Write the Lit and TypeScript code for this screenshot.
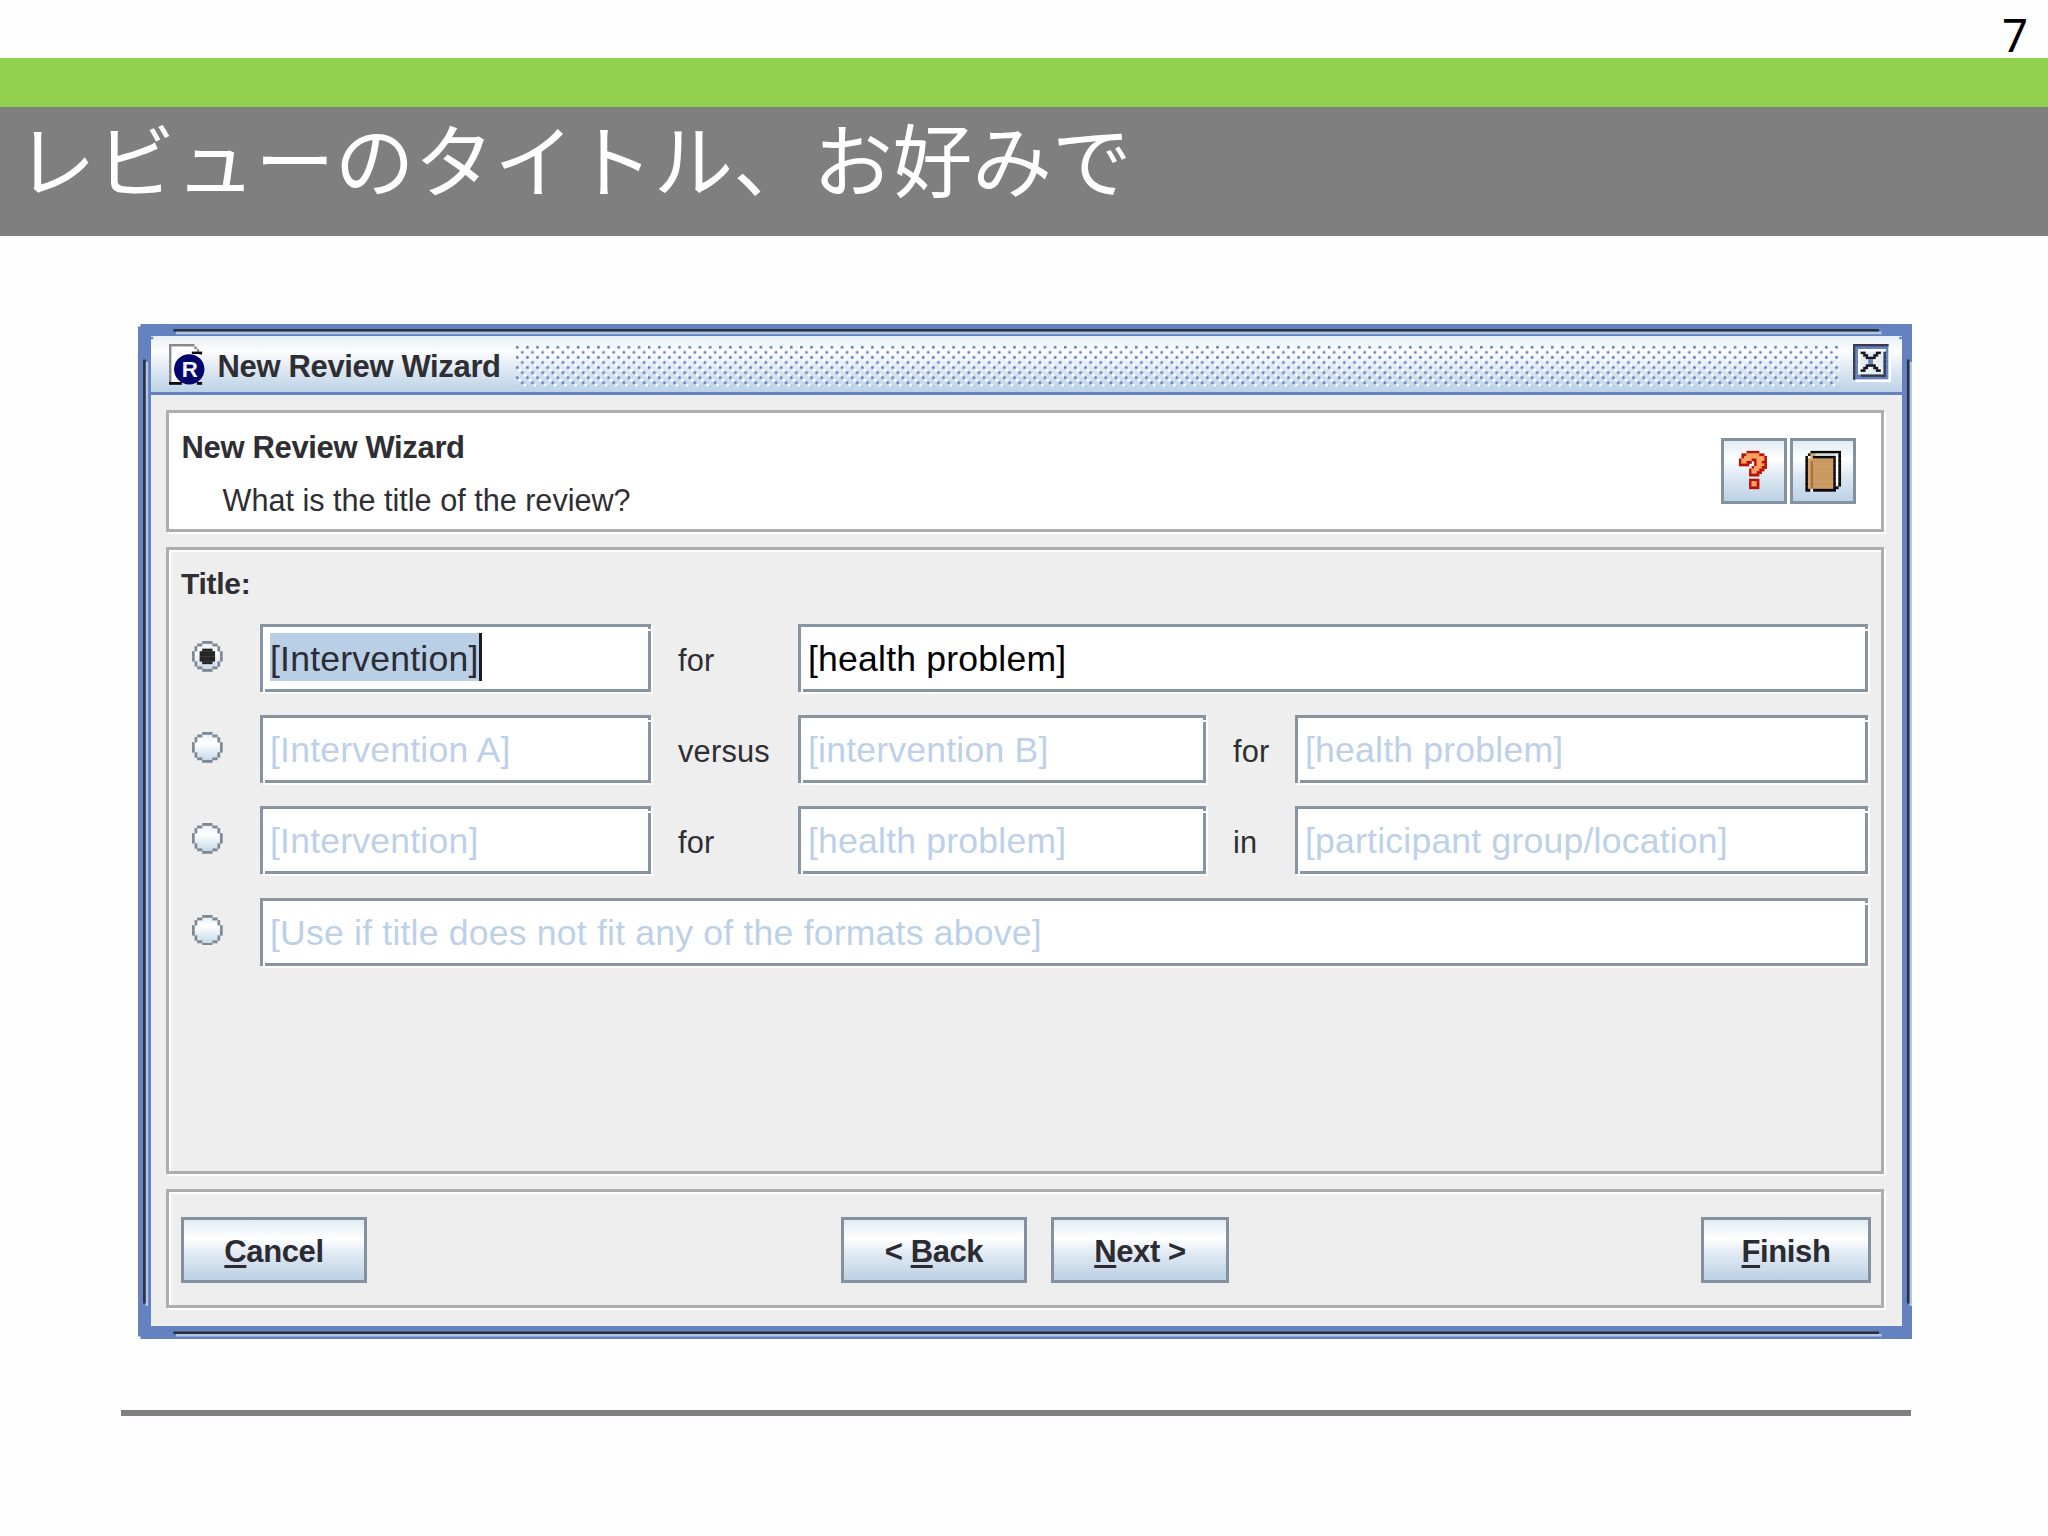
import { LitElement, html, svg, css } from "lit";
import { customElement, property } from "lit/decorators.js";

/**
 * Draws a grid of square pixels; each character of a row selects a palette colour.
 * Runs overlap their neighbours slightly so that no seams show between them.
 */
const pixels = (rows: string[], palette: Record<string, string>) =>
  rows.flatMap((row, y) => {
    const out = [];
    let x = 0;
    while (x < row.length) {
      let end = x + 1;
      while (end < row.length && row[end] === row[x]) end++;
      const fill = palette[row[x]];
      if (fill) out.push(svg`<rect x=${x} y=${y} width=${end - x + 0.08} height="1.12" fill=${fill}></rect>`);
      x = end;
    }
    return out;
  });

const QUESTION = [
  "   rrrrr   ",
  " rrooooorr ",
  " roooooooor",
  "roooorrooor",
  "roorr roorr",
  "rrrr  rooor",
  "     rooorr",
  "    rooorr ",
  "    roorr  ",
  "    rrrr   ",
  "           ",
  "    rrrr   ",
  "    roor   ",
  "    roor   ",
  "    rrrr   ",
];

const BOOK = [
  "  kkkkkkkkkkkk",
  " kttggggggggwk",
  "kwtkkkkkkkkkwk",
  "kttbbbbbbbbkwk",
  ...Array(10).fill("ktdbbbbbbbbkwk"),
  "ktdbbbbbbbbkk ",
  "kkwkkkkkkkkk  ",
];

const RING = [
  "    gggg    ",
  "  gg    gg  ",
  " g        g ",
  " g        g ",
  "g          g",
  "g          g",
  "g          g",
  "g          g",
  " g        g ",
  " g        g ",
  "  gg    gg  ",
  "    gggg    ",
];

const DOT = [" kkkk ", "kkkkkk", "kkkkkk", "kkkkkk", "kkkkkk", " kkkk "];

const CLOSE = [
  "nnnnnnnnnnnnnn ",
  "nbbbbbbbbbbbbbw",
  "nbwwwwwwwwwwwbw",
  "nbwkkllllkklnbw",
  "nbwlkkllkkllnbw",
  "nbwllkkkkwllnbw",
  "nbwlllbbwlllnbw",
  "nbwlllbbwlllnbw",
  "nbwllkkkkwllnbw",
  "nbwlkkwlkkwlnbw",
  "nbwkkwlllkkwnbw",
  "nbwlllllllllnbw",
  "nbbnnnnnnnnnnbw",
  "nbbbbbbbbbbbbbw",
  " wwwwwwwwwwwwww",
];

const PAGE = [
  "gggggggggg      ",
  "gwwwwwwwwwgw    ",
  "gwwwwwwwwwwgw   ",
  "gwwwwwwwwkkkk   ",
  ...Array(11).fill("gwwwwwwwwwww    "),
  "kkkkk      kk   ",
];

@customElement("wizard-field")
export class WizardField extends LitElement {
  @property() text = "";
  @property({ type: Boolean, reflect: true }) active = false;
  @property({ type: Boolean, reflect: true }) selected = false;

  static styles = css`
    :host {
      display: block;
      box-sizing: border-box;
      position: relative;
      height: 68px;
      border: 3px solid #8794a1;
      background: #fff;
      box-shadow: 2px 2px 0 #fff;
      padding: 6px 0 0 7.5px;
      font: 35.6px/52px "Liberation Sans", Arial, sans-serif;
      letter-spacing: 0.2px;
      color: #bcd1e7;
      white-space: nowrap;
    }
    :host([active]) { color: #000; }
    :host([selected]) { color: #2c2c34; }
    :host::before,
    :host::after {
      content: "";
      position: absolute;
      background: #fff;
    }
    :host::before { right: -3px; top: 2px; width: 3px; height: 2px; }
    :host::after { left: 0; bottom: -3px; width: 2px; height: 3px; }
    .value { display: inline-block; height: 48px; }
    :host([selected]) .value {
      background: #b8cfe5;
      border-right: 3px solid #1c1c1c;
    }
  `;

  render() {
    return html`<span class="value">${this.text}</span>`;
  }
}

@customElement("wizard-radio")
export class WizardRadio extends LitElement {
  @property({ type: Boolean }) checked = false;

  static styles = css`
    :host { display: block; width: 30.5px; height: 30.5px; }
    svg { display: block; width: 100%; height: 100%; }
  `;

  render() {
    return html`<svg viewBox="0 0 12 12">
      <defs>
        <linearGradient id="g" x1="0" y1="0" x2="0" y2="1">
          <stop offset="0" stop-color="#e3edf5"></stop>
          <stop offset=".35" stop-color="#ffffff"></stop>
          <stop offset="1" stop-color="#c2d6e8"></stop>
        </linearGradient>
      </defs>
      <circle cx="6" cy="6" r="5.6" fill="url(#g)"></circle>
      ${pixels(RING, { g: "#7d8995" })}
      ${this.checked ? svg`<g transform="translate(3 3)">${pixels(DOT, { k: "#262626" })}</g>` : ""}
    </svg>`;
  }
}

@customElement("wizard-button")
export class WizardButton extends LitElement {
  @property() before = "";
  @property() key = "";
  @property() after = "";

  static styles = css`
    :host {
      display: flex;
      box-sizing: border-box;
      height: 66px;
      justify-content: center;
      padding-top: 15px;
      border: 3px solid #84919e;
      background: linear-gradient(#e0ebf2, #fff 30%, #dfe8f2 58%, #bbd1e5);
      font: bold 31px/34px "Liberation Sans", Arial, sans-serif;
      letter-spacing: -0.4px;
      color: #2b2b31;
      white-space: pre;
    }
    .key {
      text-decoration: underline;
      text-decoration-thickness: 2.5px;
      text-underline-offset: 2.5px;
      text-decoration-skip-ink: none;
    }
  `;

  render() {
    return html`<span>${this.before}<span class="key">${this.key}</span>${this.after}</span>`;
  }
}

@customElement("app-root")
export class AppRoot extends LitElement {
  static styles = css`
    :host {
      display: block;
      width: 2048px;
      height: 1536px;
      overflow: hidden;
      background: #fefefe;
      font-family: "Liberation Sans", Arial, sans-serif;
      color: #2e2e33;
    }
    svg { display: block; }
    .number {
      box-sizing: border-box;
      height: 58px;
      padding: 4px 20px 0 0;
      text-align: right;
      font: 45.5px/61px "Noto Sans", sans-serif;
      color: #000;
    }
    .green { height: 49px; background: #92d050; }
    .heading {
      box-sizing: border-box;
      height: 129px;
      margin: 0;
      padding-left: 16px;
      background: #7f7f7f;
      color: #fff;
      font: 400 79.7px/100px "Noto Sans CJK JP", sans-serif;
      white-space: nowrap;
    }
    .window {
      box-sizing: border-box;
      position: relative;
      width: 1774px;
      height: 1015px;
      margin: 88px 0 0 138px;
      padding: 12px 10px 13px 13px;
      background: #6382bf;
    }
    .frame { position: absolute; inset: 0; width: 100%; height: 100%; pointer-events: none; }
    .inside { height: 990px; background: #eeeeef; }
    .titlebar {
      box-sizing: border-box;
      display: flex;
      align-items: flex-start;
      height: 59px;
      padding: 8px 10px 0 17.5px;
      border-bottom: 3px solid #6382bf;
      background: linear-gradient(#e6eff5, #fcfdfe 28%, #dfe9f3 58%, #bdd2e6);
    }
    .logo { width: 40.5px; height: 40.5px; }
    .caption { margin: 6px 0 0 8.5px; width: 298px; white-space: nowrap; }
    .caption, .name { font: bold 31px/34px "Liberation Sans", Arial, sans-serif; letter-spacing: -0.35px; }
    .bumps { width: 1323px; height: 42px; margin-top: 2px; }
    .close { width: 38px; height: 38px; margin-left: 14.5px; }
    .panels { display: flex; flex-direction: column; gap: 15px; padding: 15px 18px 0 15px; }
    .panel {
      box-sizing: border-box;
      border: 3px solid #adadad;
      box-shadow: 2px 2px 0 #fff, inset 2px 2px 0 #fff;
    }
    .intro { display: flex; justify-content: space-between; height: 122px; padding: 17px 25px 0 12.5px; background: #fff; }
    .name { margin: 1px 0 0; }
    .question { margin: 18px 0 0 41px; font-size: 30.6px; line-height: 34px; }
    .tools { display: flex; gap: 3px; padding-top: 8px; }
    .tool {
      box-sizing: border-box;
      width: 66px;
      height: 66px;
      border: 3px solid #84919e;
      background: linear-gradient(#e0ebf2, #fff 30%, #dfe8f2 58%, #bbd1e5);
    }
    .tool svg { width: 60px; height: 60px; }
    .form { height: 627px; padding: 17px 0 0 12px; }
    .label { font: bold 30px/34px "Liberation Sans", Arial, sans-serif; letter-spacing: -0.3px; }
    .rows { display: flex; flex-direction: column; gap: 23.2px; padding-top: 23px; }
    .row { display: flex; align-items: flex-start; }
    .radio { margin: 17px 37px 0 11px; }
    .word { box-sizing: border-box; font-size: 30.8px; line-height: 34px; padding: 20px 0 0 27.5px; letter-spacing: 0.2px; }
    .w1 { width: 391px; }
    .wide { width: 1070px; }
    .mid { width: 408px; }
    .last { width: 573px; }
    .full { width: 1608px; }
    .word1 { width: 147px; }
    .word2 { width: 89px; }
    .footer { display: flex; height: 119px; padding: 25px 10px 0 12px; }
    .cancel { width: 186px; }
    .back { width: 186px; margin-left: 474px; }
    .next { width: 178px; margin-left: 24px; }
    .finish { width: 170px; margin-left: auto; }
    .rule { width: 1790px; height: 6px; margin: 71px 0 0 121px; background: #807e80; }
  `;

  private frame() {
    const light = "#b4c6e6";
    const dark = "#2b303c";
    return html`<svg class="frame" viewBox="0 0 700 400" preserveAspectRatio="none">
      <path fill=${light} d="M15 3H688V4H15ZM15 398H688V399H15ZM3 15H4V387H3ZM699 15H700V387H699Z"></path>
      <path fill=${dark} d="M14 2H687V3H14ZM14 397H687V398H14ZM2 14H3V386H2ZM698 14H699V386H698Z"></path>
      <path fill="#fefefe" d="M0 0H1V1H0ZM0 399H1V400H0Z"></path>
      <path fill="#6382bf" d="M5 5H6V6H5ZM695 5H696V6H695Z"></path>
    </svg>`;
  }

  render() {
    return html`
      <div class="number">7</div>
      <div class="green"></div>
      <h1 class="heading">レビューのタイトル、お好みで</h1>
      <section class="window">
        <div class="inside">
          <header class="titlebar">
            <svg class="logo" viewBox="0 0 16 16">
              ${pixels(PAGE, { g: "#85898c", w: "#ffffff", k: "#0b0b12" })}
              <circle cx="8" cy="10" r="6" fill="#04046e"></circle>
              <text x="8.2" y="13.2" text-anchor="middle" font-family="Liberation Sans" font-weight="bold" font-size="8.8" fill="#f4f4ff">R</text>
            </svg>
            <span class="caption">New Review Wizard</span>
            <svg class="bumps" width="1323" height="42">
              <defs>
                <pattern id="b" width="4" height="4" patternUnits="userSpaceOnUse" patternTransform="scale(2.537)">
                  <path fill="#5f7fc4" d="M0 0H1V1H0ZM2 2H3V3H2Z"></path>
                  <path fill="#ffffff" d="M1 1H2V2H1ZM3 3H4V4H3Z"></path>
                </pattern>
              </defs>
              <rect width="1323" height="40.6" fill="url(#b)"></rect>
            </svg>
            <svg class="close" viewBox="0 0 15 15">
              ${pixels(CLOSE, { n: "#363c50", b: "#6382bf", w: "#ffffff", l: "#e4ecf6", k: "#14141e" })}
            </svg>
          </header>
          <div class="panels">
            <div class="panel intro">
              <div>
                <h2 class="name">New Review Wizard</h2>
                <div class="question">What is the title of the review?</div>
              </div>
              <div class="tools">
                <div class="tool">
                  <svg viewBox="1.1 1.1 23.7 23.7"><g transform="translate(7 5)">${pixels(QUESTION, { r: "#b80f08", o: "#ffa15c" })}</g></svg>
                </div>
                <div class="tool">
                  <svg viewBox="1.1 1.1 23.7 23.7"><g transform="translate(6 5)">${pixels(BOOK, { k: "#0a0a0a", t: "#d9a468", g: "#d5e0dc", w: "#ffffff", b: "#cc9860", d: "#a86f3c" })}</g></svg>
                </div>
              </div>
            </div>
            <div class="panel form">
              <div class="label">Title:</div>
              <div class="rows">
                <div class="row">
                  <wizard-radio class="radio" checked></wizard-radio>
                  <wizard-field class="w1" active selected text="[Intervention]"></wizard-field>
                  <span class="word word1">for</span>
                  <wizard-field class="wide" active text="[health problem]"></wizard-field>
                </div>
                <div class="row">
                  <wizard-radio class="radio"></wizard-radio>
                  <wizard-field class="w1" text="[Intervention A]"></wizard-field>
                  <span class="word word1">versus</span>
                  <wizard-field class="mid" text="[intervention B]"></wizard-field>
                  <span class="word word2">for</span>
                  <wizard-field class="last" text="[health problem]"></wizard-field>
                </div>
                <div class="row">
                  <wizard-radio class="radio"></wizard-radio>
                  <wizard-field class="w1" text="[Intervention]"></wizard-field>
                  <span class="word word1">for</span>
                  <wizard-field class="mid" text="[health problem]"></wizard-field>
                  <span class="word word2">in</span>
                  <wizard-field class="last" text="[participant group/location]"></wizard-field>
                </div>
                <div class="row">
                  <wizard-radio class="radio"></wizard-radio>
                  <wizard-field class="full" text="[Use if title does not fit any of the formats above]"></wizard-field>
                </div>
              </div>
            </div>
            <div class="panel footer">
              <wizard-button class="cancel" key="C" after="ancel"></wizard-button>
              <wizard-button class="back" before="< " key="B" after="ack"></wizard-button>
              <wizard-button class="next" key="N" after="ext >"></wizard-button>
              <wizard-button class="finish" key="F" after="inish"></wizard-button>
            </div>
          </div>
        </div>
        ${this.frame()}
      </section>
      <div class="rule"></div>
    `;
  }
}
